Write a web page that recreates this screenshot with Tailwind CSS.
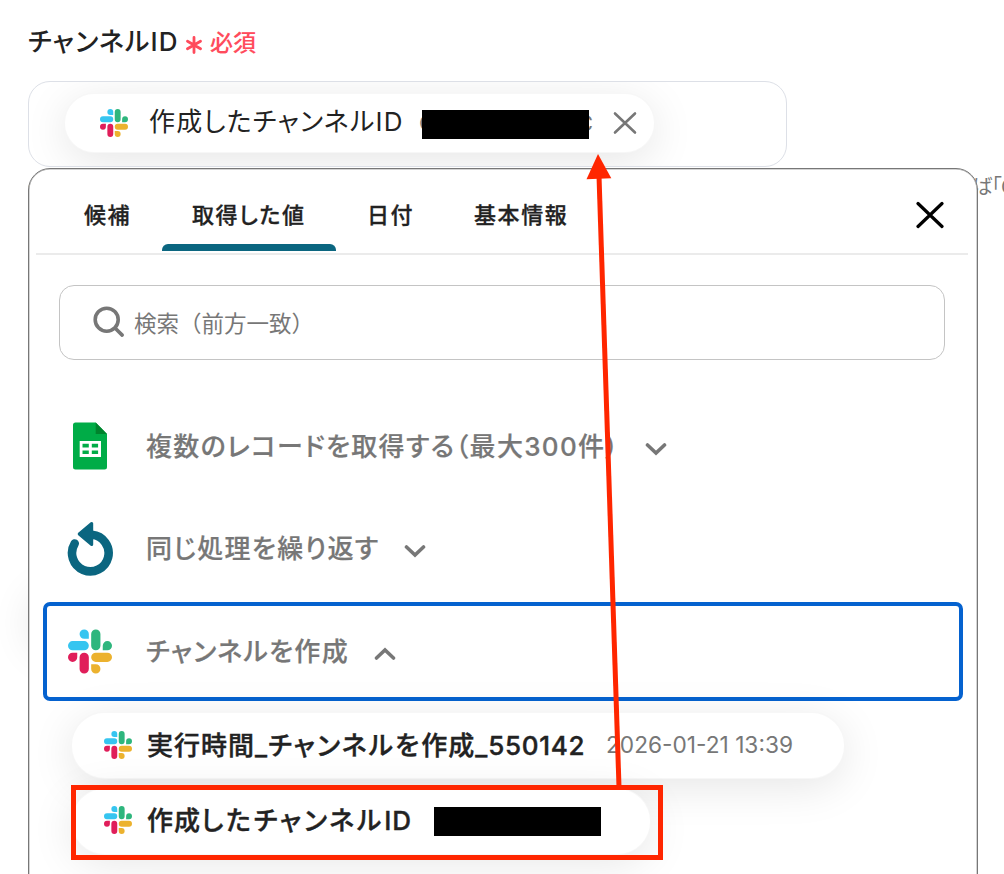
<!DOCTYPE html>
<html lang="ja">
<head>
    <meta charset="UTF-8">
    <meta name="viewport" content="width=device-width, initial-scale=1.0">
    <title>チャンネルID</title>
    <script src="https://cdn.jsdelivr.net/npm/@tailwindcss/browser@4"></script>
</head>
<body class="bg-white text-[#222] font-['Inter','Noto_Sans_CJK_JP',sans-serif]">

    <svg class="hidden">
        <symbol id="slack" viewBox="0 0 24 24" stroke="none">
            <path fill="#e01e5a" d="M5.042 15.165a2.528 2.528 0 0 1-2.52 2.523A2.528 2.528 0 0 1 0 15.165a2.527 2.527 0 0 1 2.522-2.52h2.52v2.52zM6.313 15.165a2.527 2.527 0 0 1 2.521-2.52 2.527 2.527 0 0 1 2.521 2.52v6.313A2.528 2.528 0 0 1 8.834 24a2.528 2.528 0 0 1-2.521-2.522v-6.313z"/>
            <path fill="#36c5f0" d="M8.834 5.042a2.528 2.528 0 0 1-2.521-2.52A2.528 2.528 0 0 1 8.834 0a2.528 2.528 0 0 1 2.521 2.522v2.52H8.834zM8.834 6.313a2.528 2.528 0 0 1 2.521 2.521 2.528 2.528 0 0 1-2.521 2.521H2.522A2.528 2.528 0 0 1 0 8.834a2.528 2.528 0 0 1 2.522-2.521h6.312z"/>
            <path fill="#2eb67d" d="M18.956 8.834a2.528 2.528 0 0 1 2.522-2.521A2.528 2.528 0 0 1 24 8.834a2.528 2.528 0 0 1-2.522 2.521h-2.522V8.834zM17.688 8.834a2.528 2.528 0 0 1-2.523 2.521 2.527 2.527 0 0 1-2.52-2.521V2.522A2.527 2.527 0 0 1 15.165 0a2.528 2.528 0 0 1 2.523 2.522v6.312z"/>
            <path fill="#ecb22e" d="M15.165 18.956a2.528 2.528 0 0 1 2.523 2.522A2.528 2.528 0 0 1 15.165 24a2.527 2.527 0 0 1-2.52-2.522v-2.522h2.52zM15.165 17.688a2.527 2.527 0 0 1-2.52-2.523 2.526 2.526 0 0 1 2.520-2.520h6.313A2.527 2.527 0 0 1 24 15.165a2.528 2.528 0 0 1-2.522 2.523h-6.313z"/>
        </symbol>
    </svg>

    <div class="relative w-[1004px] h-[874px] overflow-hidden">

        <!-- field -->
        <div class="pl-7 pt-[21px]">
            <div class="flex items-center h-10 [font-feature-settings:'palt'] font-medium whitespace-nowrap">
                <span class="text-[26px] leading-10 w-[158px] mt-[1px] tracking-[1.2px]">チャンネルID</span>
                <svg class="w-[16px] h-[18px] mt-[7px]" viewBox="0 0 16 18" fill="none" stroke="#ff4b5c" stroke-width="2.8" stroke-linecap="round"><path d="M8 1.5v15M1.5 5.2l13 7.6M14.5 5.2l-13 7.6"/></svg>
                <span class="ml-2 text-[23px] leading-10 text-[#ff4b5c] mt-[3px] [-webkit-text-stroke:0.1px]">必須</span>
            </div>
            <div class="mt-5 w-[759px] h-[86px] border border-[#dde0e7] rounded-[22px] overflow-hidden pl-[35px] pt-[11px]">
                <div class="flex items-center w-[591px] h-[60px] rounded-full bg-white border border-black/[0.03] shadow-[0_8px_44px_rgba(0,0,0,0.1)] pl-[35px] whitespace-nowrap">
                    <svg class="w-7 h-7 shrink-0"><use href="#slack"/></svg>
                    <span class="ml-[21px] w-[270px] text-[26px] leading-10 tracking-[1.25px] [font-feature-settings:'palt'] -mt-[3px]">作成したチャンネルID</span>
                    <span class="relative w-[174px] h-[30px] flex justify-between text-[22px] leading-[30px] text-[#777]">
                        <span>C</span><span>C</span>
                        <span class="absolute left-[3px] top-[2px] w-[167px] h-[29px] bg-black"></span>
                    </span>
                    <svg class="ml-[20px] w-6 h-6" viewBox="0 0 24 24" fill="none" stroke="#777" stroke-width="2.6" stroke-linecap="round"><path d="M2 2.500l20 19M22 2.500l-20 19"/></svg>
                </div>
            </div>
            <div class="flex justify-between mt-1 text-[20px] leading-[30px] text-[#777] [font-feature-settings:'palt'] whitespace-nowrap">
                <span>※</span>
                <span class="w-[32px] mt-[1px] tracking-[-0.6px]">ば「C</span>
            </div>
        </div>

        <!-- card behind the panel, only its shadow shows -->
        <div class="absolute left-[32px] top-[585px] w-[200px] h-[60px] rounded-full shadow-[0_8px_44px_rgba(0,0,0,0.12)]"></div>

        <!-- panel -->
        <div class="absolute left-7 top-[168px] w-[950px] h-[760px] bg-white border-[1.5px] border-[#777] rounded-[22px] shadow-[inset_0_0_0_0.5px_#aaa]">
            <div class="ml-[7px] mr-[9px] h-[86px] border-b-2 border-[#ebebeb] flex justify-between">
                <div class="flex text-[22px] font-medium [-webkit-text-stroke:0.3px] tracking-[1.6px] leading-[92px] [font-feature-settings:'palt'] whitespace-nowrap">
                    <span class="pl-12 w-[126px]">候補</span>
                    <span class="w-[173px] h-[82px] border-b-[7px] border-transparent relative pl-[30px]">取得した値
                        <span class="absolute left-0 top-[75px] w-[174px] h-[7px] rounded-t-md bg-[#0b6680]"></span>
                    </span>
                    <span class="pl-8 w-[139px]">日付</span>
                    <span>基本情報</span>
                </div>
                <svg class="w-7 h-7 mt-[32px] mr-[24px]" viewBox="0 0 28 28" fill="none" stroke="#000" stroke-width="3.2" stroke-linecap="round"><path d="M2 2.500l24 23M26 2.500l-24 23"/></svg>
            </div>

            <div class="ml-[30px] mt-[30px] w-[886px] h-[75px] border border-[#c4c4c4] rounded-[15px] flex items-center pl-[33px]">
                <svg class="w-8 h-8 -mt-[2px]" viewBox="0 0 32 32" fill="none" stroke="#777" stroke-width="3.6" stroke-linecap="round"><circle cx="13.7" cy="13.7" r="11.5"/><path d="M22.5 22.5l6.7 6.6"/></svg>
                <span class="ml-[9px] mt-[3px] text-[22.5px] leading-8 text-[#777]">検索（前方一致）</span>
            </div>

            <div class="mt-[38px] text-[26px] font-medium [-webkit-text-stroke:0.2px] text-[#777] [font-feature-settings:'palt'] whitespace-nowrap">
                <div class="flex items-center h-24 pl-[37px]">
                    <span class="w-12 flex justify-center">
                        <svg class="w-[34px] h-[48px]" viewBox="0 0 34 48" stroke="none">
                            <path fill="#00ac47" d="M2.500 .5H22.700L34 12V45a2.500 2.500 0 0 1-2.500 2.500H2.500A2.500 2.500 0 0 1 0 45V3A2.500 2.500 0 0 1 2.500 .5z"/>
                            <path fill="#00832d" d="M22.700 .5L34 12H22.700z"/>
                            <path fill="#fff" fill-rule="evenodd" d="M6.700 19h21.300v16H6.700zM9.500 21.700v3.700h6.300v-3.700zM18.800 21.700v3.700h6.300v-3.700zM9.500 28.400v3.700h6.300v-3.700zM18.800 28.400v3.700h6.300v-3.700z"/>
                        </svg>
                    </span>
                    <span class="ml-[32px] w-[499px] mt-[1px] leading-10 tracking-[1.3px]">複数のレコードを取得する（最大300件）</span>
                    <svg class="w-[22px] h-[14px] mt-[5px]" viewBox="0 0 22 14" fill="none" stroke="#777" stroke-width="3.6" stroke-linecap="round"><path d="M2.500 3l8.500 8 8.500-8"/></svg>
                </div>
                <div class="flex items-center h-[108px] pl-[37px]">
                    <svg class="w-12 h-14 mt-[1px]" viewBox="0 0 48 56">
                        <path fill="none" stroke="#0b6680" stroke-width="8.600" stroke-linecap="round" d="M8.700 22.500A18.300 18.300 0 1 0 26 13.800"/>
                        <path fill="#0b6680" stroke="#0b6680" stroke-width="3" stroke-linejoin="round" d="M13.200 13L25.700 2.500v21z"/>
                    </svg>
                    <span class="ml-[32px] w-[258px] mt-[1px] leading-10 tracking-[1.3px]">同じ処理を繰り返す</span>
                    <svg class="w-[22px] h-[14px] mt-[6px]" viewBox="0 0 22 14" fill="none" stroke="#777" stroke-width="3.6" stroke-linecap="round"><path d="M2.500 3l8.500 8 8.500-8"/></svg>
                </div>
                <div class="ml-[14px] w-[920px] h-[99px] border-4 border-[#0562cf] rounded-[7px] flex items-center pl-[21px]">
                    <svg class="w-[44px] h-[45px]"><use href="#slack"/></svg>
                    <span class="ml-[34px] w-[228px] leading-10 tracking-[1.3px]">チャンネルを作成</span>
                    <svg class="w-[22px] h-[14px] mt-1" viewBox="0 0 22 14" fill="none" stroke="#777" stroke-width="3.6" stroke-linecap="round"><path d="M2.500 11l8.500-8 8.500 8"/></svg>
                </div>
            </div>

            <div class="mt-[11px] ml-[42px] text-[26px] font-medium [-webkit-text-stroke:0.4px] [font-feature-settings:'palt'] whitespace-nowrap">
                <div class="flex items-center w-[774px] h-[67px] rounded-full bg-white border border-black/[0.03] shadow-[0_8px_44px_rgba(0,0,0,0.1)] pl-8">
                    <svg class="w-7 h-7 shrink-0 -mt-[1px]"><use href="#slack"/></svg>
                    <span class="ml-[15px] w-[459px] leading-10 tracking-[1px]">実行時間_<span class="tracking-[2.1px]">チャンネルを</span>作成_<span class="tracking-[0.7px]">550142</span></span>
                    <span class="text-[22.7px] leading-10 -mt-[1px] font-normal [-webkit-text-stroke:0px] text-[#777]">2026-01-21 13:39</span>
                </div>
                <div class="mt-[9px] flex items-center w-[580px] h-[67px] rounded-full bg-white border border-black/[0.03] shadow-[0_8px_44px_rgba(0,0,0,0.1)] pl-8">
                    <svg class="w-7 h-7 shrink-0 -mt-[3px]"><use href="#slack"/></svg>
                    <span class="ml-[15px] w-[287px] -mt-[2px] leading-10 tracking-[1.1px]">作成<span class="tracking-[2.8px]">したチャンネル</span>ID</span>
                    <span class="w-[167px] h-[29px] bg-black"></span>
                </div>
            </div>
        </div>

        <!-- annotation: frame and arrow -->
        <div class="absolute left-[71px] top-[785px] w-[592px] h-[75px] border-[5px] border-[#ff2600]"></div>
        <svg class="absolute left-0 top-0 w-[1004px] h-[874px]" viewBox="0 0 1004 874">
            <path stroke="#ff2600" stroke-width="5" d="M599 176L619 787"/>
            <path fill="#ff2600" d="M598 154l13.300 24.300-24.800 1z"/>
        </svg>
    </div>
</body>
</html>
